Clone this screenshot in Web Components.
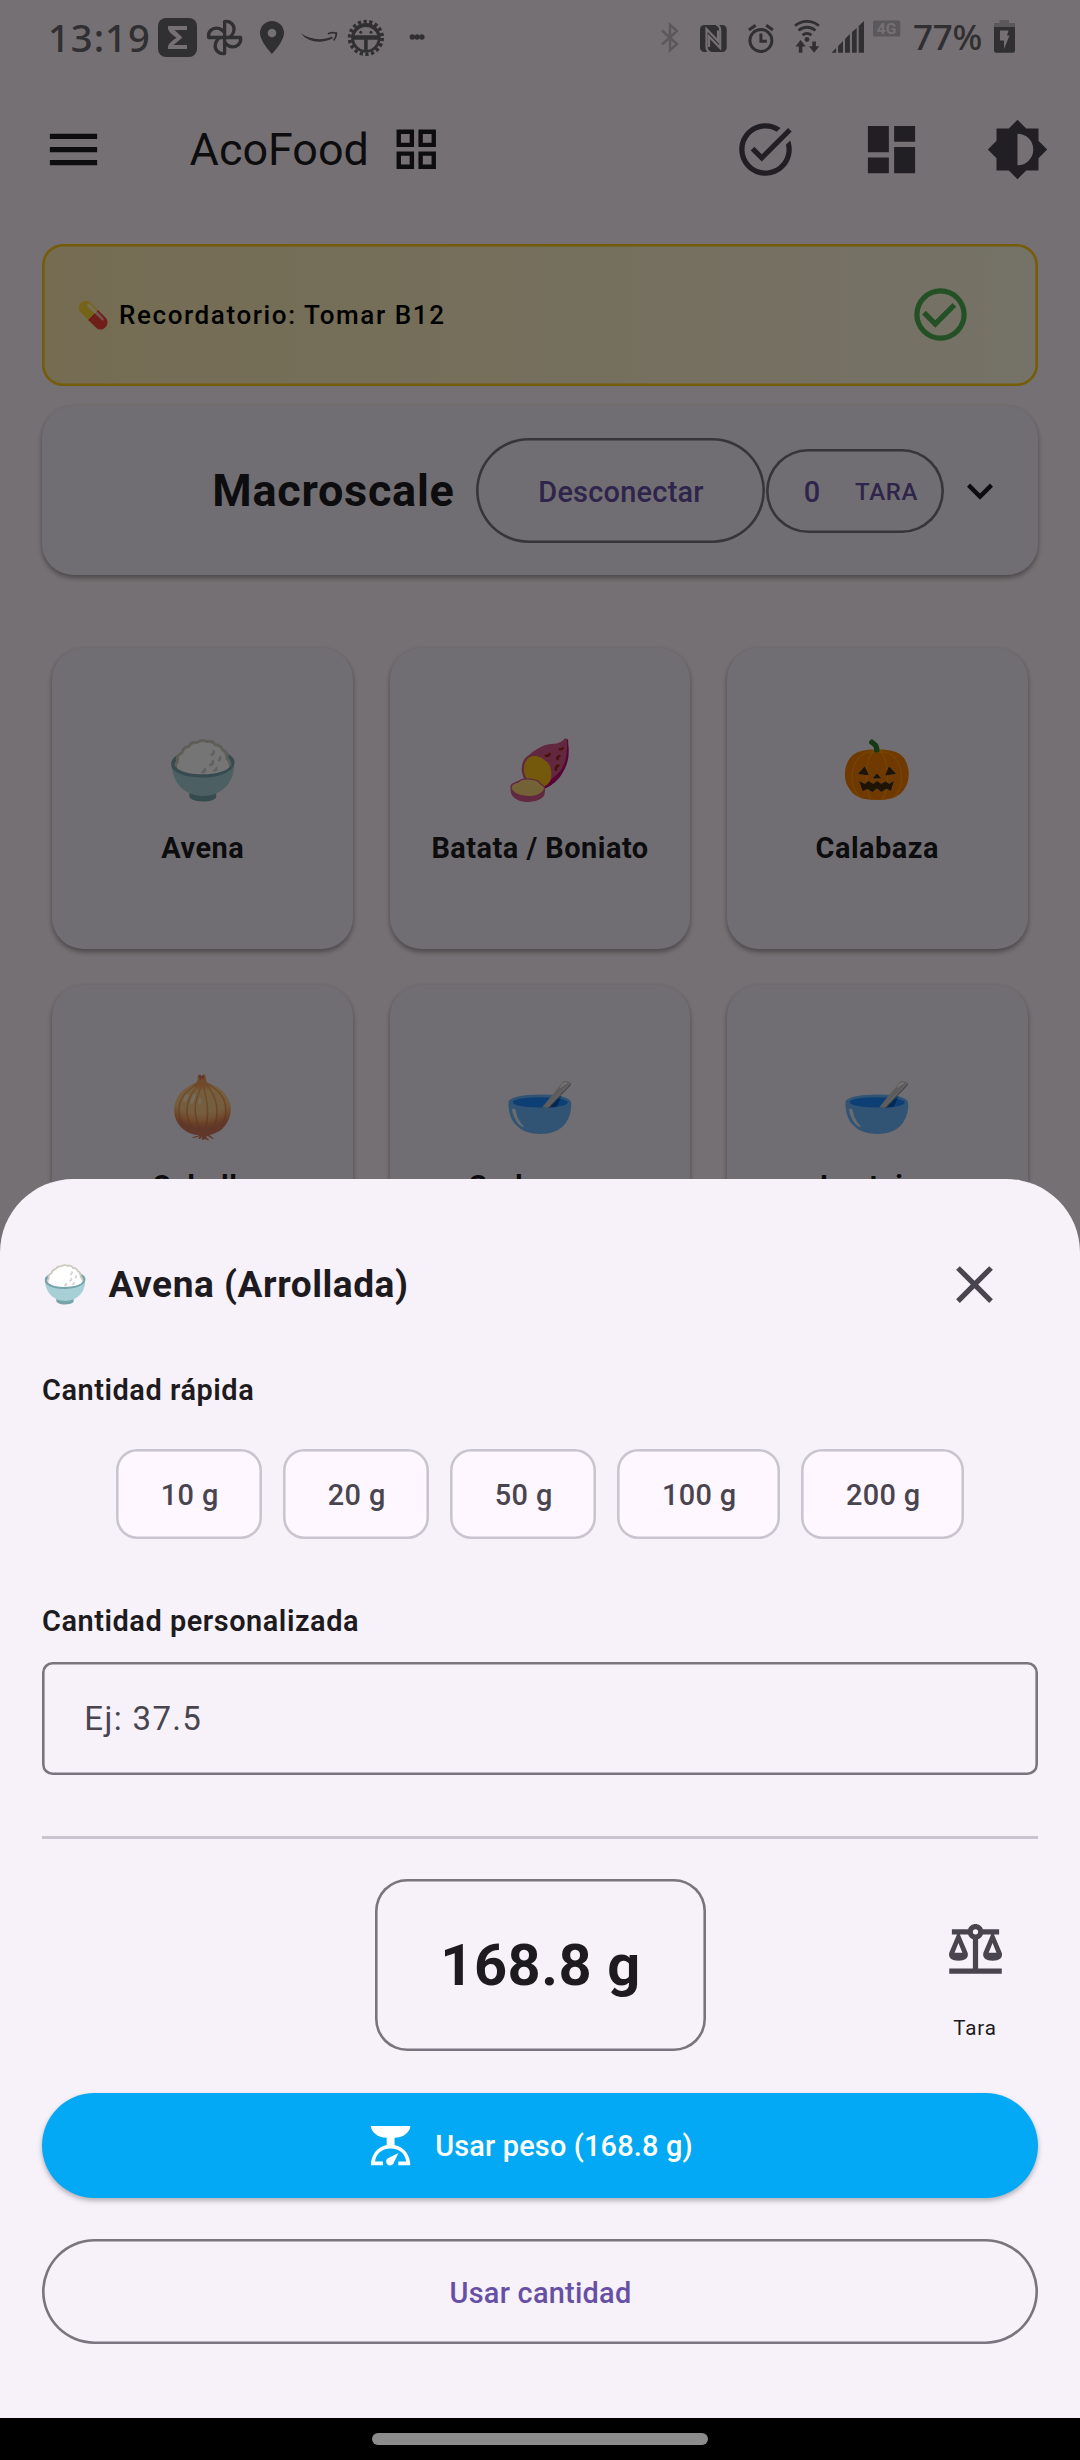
<!DOCTYPE html>
<html lang="es">
<head>
<meta charset="utf-8">
<title>AcoFood</title>
<style>
  html, body { margin: 0; padding: 0; }
  body { width: 1080px; height: 2460px; overflow: hidden; font-family: Roboto, "Noto Color Emoji", sans-serif; background: #fff5fb; }
</style>
</head>
<body>
<aco-app></aco-app>

<script>
const define = (name, html, setup) => {
  const tpl = document.createElement('template');
  tpl.innerHTML = html;
  customElements.define(name, class extends HTMLElement {
    constructor() {
      super();
      this.attachShadow({ mode: 'open' }).append(tpl.content.cloneNode(true));
    }
    connectedCallback() { if (setup) setup(this, this.shadowRoot); }
  });
};

/* 24-unit icon set */
const ICONS = {
  menu: 'M3 6h18v2H3V6m0 5h18v2H3v-2m0 5h18v2H3v-2Z',
  grid: 'M3 11H11V3H3M5 5H9V9H5M13 21H21V13H13M15 15H19V19H15M3 21H11V13H3M5 15H9V19H5M13 3V11H21V3M19 9H15V5H19Z',
  task: 'M22 5.18L10.59 16.6l-4.24-4.24 1.41-1.41 2.83 2.83 10-10L22 5.18zm-2.21 5.04c.13.57.21 1.17.21 1.78 0 4.42-3.58 8-8 8s-8-3.58-8-8 3.58-8 8-8c1.58 0 3.04.46 4.28 1.25l1.44-1.44C16.1 2.67 14.13 2 12 2 6.48 2 2 6.48 2 12s4.48 10 10 10 10-4.48 10-10c0-1.19-.22-2.33-.6-3.39l-1.61 1.61z',
  dashboard: 'M13 3V9H21V3M13 21H21V11H13M3 21H11V15H3M3 13H11V3H3V13Z',
  brightness: 'M12 18V6A6 6 0 0 1 18 12A6 6 0 0 1 12 18M20 15.31L23.31 12L20 8.69V4H15.31L12 .69L8.69 4H4V8.69L.69 12L4 15.31V20H8.69L12 23.31L15.31 20H20V15.31Z',
  done: 'M12 2A10 10 0 0 0 12 22A10 10 0 0 0 12 2M12 20A8 8 0 0 1 12 4A8 8 0 0 1 12 20M5 12L10 17L18 9L16.59 7.58L10 14.17L6.41 10.59Z',
  chevron: 'M7.41 8.58L12 13.17L16.59 8.58L18 10L12 16L6 10L7.41 8.58Z',
  close: 'M19 6.41L17.59 5L12 10.59L6.41 5L5 6.41L10.59 12L5 17.59L6.41 19L12 13.41L17.59 19L19 17.59L13.41 12L19 6.41Z',
  balance: 'M12 3C10.73 3 9.6 3.8 9.18 5H3V7H4.95L2 14C1.53 16 3 17 5.5 17C8 17 9.56 16 9 14L6.05 7H9.17C9.5 7.85 10.15 8.5 11 8.83V20H2V22H22V20H13V8.82C13.85 8.5 14.5 7.85 14.82 7H17.95L15 14C14.53 16 16 17 18.5 17C21 17 22.56 16 22 14L19.05 7H21V5H14.83C14.4 3.8 13.27 3 12 3M12 5A1 1 0 0 1 13 6A1 1 0 0 1 12 7A1 1 0 0 1 11 6A1 1 0 0 1 12 5M5.5 10.25L7 14H4L5.5 10.25M18.5 10.25L20 14H17L18.5 10.25Z',
  scale: 'M2 2H22C22 5 18.5 8 14 8V11.7C18.7 12.6 22 16.6 22 22H15.9V20.1H19.9C19.6 16.2 16.6 13.4 12 13.4C7.4 13.4 4.4 16.2 4.1 20.1H8.1V22H2C2 16.6 5.3 12.6 10 11.7V8C5.5 8 2 5 2 2ZM16 15.7L13.7 20.4A2 2 0 1 1 10.4 18.6Z'
};

define('aco-icon', `
  <style>
    :host { display: block; flex: none; width: var(--size, 63px); height: var(--size, 63px); color: #49454f; }
    svg { display: block; width: 100%; height: 100%; }
  </style>
  <svg viewBox="0 0 24 24" fill="currentColor" fill-rule="evenodd"><path/></svg>`,
  (el, r) => r.querySelector('path').setAttribute('d', ICONS[el.getAttribute('name')]));

define('status-bar', `
  <style>
    :host { display: flex; height: 74px; box-sizing: border-box; padding-left: 48px; align-items: flex-start;
            color: #6a666c; --hole: #fff5fb; --soft: #c4bfc7; }
    svg { display: block; flex: none; fill: currentColor; overflow: visible; }
    span { font-family: "Noto Sans", sans-serif; font-weight: 500; white-space: nowrap; }
    .time { font-size: 38.2px; letter-spacing: 1px; line-height: 44px; margin-top: 15px; width: 110px; }
    .pct { font-size: 35px; letter-spacing: -.3px; line-height: 44px; margin: 15px 0 0 12.5px; width: 80.5px; }
  </style>
  <span class="time">13:19</span>
  <svg style="margin-top:18px" width="39" height="39" viewBox="158 18 39 39">
    <rect x="158" y="18" width="39" height="39" rx="8"/>
    <path style="fill:var(--hole)" d="M168 26H187V30H174.5L182.5 37.5L173.5 45H187V49H168V47C168 44 172 41 176.500 37.800C172 34.500 168 31.500 168 28Z"/>
  </svg>
  <svg style="margin:19px 0 0 9px" width="37" height="37" viewBox="206 19 37 37">
    <g fill="none" stroke="currentColor" stroke-width="3.300" stroke-linejoin="round">
      <path d="M224.600 37.500V21.600C230.500 20.500 234.300 25 234 29.500C233.800 32.700 232 35.500 229.500 37.500"/>
      <path d="M224.600 37.500H240.600C241.500 43.500 237 47 232.600 46.900C229 46.700 226.200 44.500 224.600 42"/>
      <path d="M224.600 37.500V53.500C218.500 54.400 215 50 215.200 45.500C215.400 42.200 217.300 39.500 219.700 37.500"/>
      <path d="M224.600 37.500H208.600C207.700 31.500 212 28 216.600 28.100C220 28.300 223 30.300 224.600 33"/>
    </g>
  </svg>
  <svg style="margin:21px 0 0 16.700px" width="24" height="33" viewBox="259.700 21 24 33">
    <path fill-rule="evenodd" d="M271.700 21A12 12 0 0 0 259.700 33C259.700 41.500 271.700 54 271.700 54S283.700 41.500 283.700 33A12 12 0 0 0 271.700 21ZM271.700 28.700A4.300 4.300 0 1 1 271.700 37.300A4.300 4.300 0 0 1 271.700 28.700Z"/>
  </svg>
  <svg style="margin:31px 0 0 16.900px" width="36" height="12" viewBox="300.600 31 36 12">
    <path d="M300.800 33.500C311 40.500 323 40.500 331.500 36.500L332.500 38.200C322 43.800 308 43 300.800 33.500Z"/>
    <path d="M327.500 34C331 32.200 334 32.500 336 33.200C336 36 335 38.500 333.300 40.300" fill="none" stroke="currentColor" stroke-width="1.800"/>
  </svg>
  <svg style="margin:18.500px 0 0 10.200px" width="38" height="38" viewBox="346.500 18.500 38 38">
    <circle cx="365.400" cy="37.400" r="14.800"/>
    <circle cx="365.400" cy="37.400" r="16.300" fill="none" stroke="currentColor" stroke-width="3.700" stroke-dasharray="3.200 2.490"/>
    <g style="fill:var(--hole)">
      <path d="M354 34.800A12 12 0 0 1 376.800 34.800Z"/>
      <path d="M353.600 39.300H363.600V49.500A12 12 0 0 1 353.600 39.300ZM367.200 39.300H377.200A12 12 0 0 1 367.200 49.500Z"/>
    </g>
    <circle cx="360.300" cy="31.800" r="1.500"/><circle cx="370.500" cy="31.800" r="1.500"/>
  </svg>
  <svg style="margin:34px 0 0 24.500px" width="16" height="6" viewBox="409 34 16 6">
    <circle cx="412.300" cy="37" r="2.700"/><circle cx="417.100" cy="37" r="2.700"/><circle cx="421.900" cy="37" r="2.700"/>
  </svg>

  <svg style="margin:23px 0 0 auto;color:var(--soft)" width="18" height="29" viewBox="661 23 18 29">
    <path d="M662 30.500L677 44L670 50.300V24.700L677 31L662 44.500" fill="none" stroke="currentColor" stroke-width="2.500"/>
  </svg>
  <svg style="margin:24.500px 0 0 21px" width="27" height="27" viewBox="700 24.500 27 27">
    <rect x="700" y="24.500" width="26.700" height="27" rx="4.500"/>
    <path style="stroke:var(--hole)" d="M710.500 52C707 51 706.500 49 706.500 46V28.500L718 40.500V30" fill="none" stroke-width="2.200"/>
    <path style="stroke:var(--hole)" d="M716.200 24C719.700 25 720.200 27 720.200 30V47.500L709 36V46.500" fill="none" stroke-width="2.200"/>
  </svg>
  <svg style="margin:23.500px 0 0 20.700px" width="26" height="29" viewBox="747.700 23.500 26 29">
    <g fill="none" stroke="currentColor" stroke-width="3"><circle cx="760.600" cy="40" r="11"/>
    <path d="M748.600 29.500L755.300 24.800M772.600 29.500L765.900 24.800M760.600 33V40.800H766.500"/></g>
  </svg>
  <svg style="margin:18.500px 0 0 20.300px" width="26" height="34" viewBox="794 18.500 26 34">
    <g fill="none" stroke="currentColor" stroke-width="2.800"><path d="M795 25.300A18.500 18.500 0 0 1 819 25.300"/>
    <path d="M798.600 30A12.500 12.500 0 0 1 815.400 30"/><path d="M802.600 34.700A6.500 6.500 0 0 1 811.400 34.700"/></g>
    <circle cx="807" cy="39" r="2.400"/>
    <path d="M800.600 39.500L805.800 46H802.400V52.200H798.800V46H795.400ZM814.100 52.200L808.900 45.700H812.300V41H815.900V45.700H819.300Z"/>
  </svg>
  <svg style="margin:21px 0 0 11px" width="33" height="32" viewBox="831 21 33 32">
    <path d="M831.500 52.700L836.100 48V52.700ZM838.100 46V52.700H843V41ZM845 39V52.700H849.900V34ZM852 32V52.700H856.700V28ZM858.700 26V52.700H864V21Z"/>
  </svg>
  <svg style="margin:20px 0 0 8.700px;color:var(--soft)" width="28" height="17" viewBox="872.700 20 28 17">
    <rect x="872.700" y="20.500" width="27.300" height="16" rx="1.500"/>
    <text x="876.500" y="34" font-family="Roboto" font-weight="700" font-size="15.500" style="fill:var(--hole)">4G</text>
  </svg>
  <span class="pct">77%</span>
  <svg style="margin:20px 65.500px 0 0" width="21" height="33" viewBox="993 20 21 33">
    <path style="fill:var(--soft)" d="M998.500 20H1008V23H1014V28H993V23H998.500Z"/>
    <path d="M993 27H1014V50.700A2 2 0 0 1 1012 52.700H995A2 2 0 0 1 993 50.700Z"/>
    <path style="fill:var(--hole)" d="M999 30.500H1007.500L1006 35.500H1008.500L1003 49V40.500H999Z"/>
  </svg>`);

define('top-bar', `
  <style>
    :host { display: flex; align-items: center; height: 151px; padding: 0 31.5px 0 42px; }
    h1 { margin: 0 21px 0 84.6px; font-size: 44.9px; font-weight: 400; line-height: 63px; color: #1d1b20; white-space: nowrap; }
    .dark { color: #1d1b20; }
    .actions { display: flex; gap: 63px; margin-left: auto; }
  </style>
  <aco-icon name="menu" class="dark"></aco-icon>
  <h1><slot></slot></h1>
  <aco-icon name="grid" class="dark" style="--size:52.5px"></aco-icon>
  <div class="actions">
    <aco-icon name="task"></aco-icon><aco-icon name="dashboard"></aco-icon><aco-icon name="brightness"></aco-icon>
  </div>`);

define('reminder-banner', `
  <style>
    :host { display: flex; align-items: center; justify-content: space-between; height: 141.7px; box-sizing: border-box;
            padding: 0 66px 0 35px; border-radius: 21px; background: linear-gradient(90deg, #ffecb3, #fff8e1);
            box-shadow: inset 0 0 0 2.6px #ffc814; }
    span { font-size: 26px; font-weight: 500; letter-spacing: 1.6px; line-height: 40px; color: #000; white-space: nowrap; }
    aco-icon { color: #4caf50; }
  </style>
  <span><slot></slot></span><aco-icon name="done"></aco-icon>`);

define('outline-button', `
  <style>
    :host { display: flex; align-items: center; justify-content: center; box-sizing: border-box; height: 105px; border-radius: 52.5px;
            padding: 2px 0 0 1px; box-shadow: inset 0 0 0 2.6px #79747e; color: #6750a4; font-size: 28.9px; font-weight: 500;
            letter-spacing: .26px; line-height: 40px; white-space: nowrap; }
  </style><slot></slot>`);

define('scale-card', `
  <style>
    :host { display: flex; align-items: center; height: 169.4px; box-sizing: border-box; padding: 1px 0 0 170.3px; border-radius: 31.5px;
            background: #f3eff8; box-shadow: 0 2.6px 4px rgba(0,0,0,.26), 0 3px 7px rgba(0,0,0,.12); }
    h2 { margin: 0 21.1px 0 0; font-size: 45px; font-weight: 700; letter-spacing: .73px; line-height: 60px; color: #1d1b20; }
    .connect { width: 289.8px; }
    .tare { width: 177.5px; height: 84px; margin-left: .8px; justify-content: flex-start; padding: 2px 0 0 37.500px; }
    .tare b { font: 500 24px/40px Roboto, sans-serif; letter-spacing: .6px; margin-left: 34.600px; }
    aco-icon { --size: 52px; color: #1d1b20; margin-left: 10.500px; }
  </style>
  <h2>Macroscale</h2>
  <outline-button class="connect">Desconectar</outline-button>
  <outline-button class="tare"><span>0</span><b>TARA</b></outline-button>
  <aco-icon name="chevron"></aco-icon>`);

define('food-card', `
  <style>
    :host { display: flex; flex-direction: column; align-items: center; box-sizing: border-box; height: 300.8px; padding-top: 83px;
            border-radius: 31.5px; background: #f3eff8; box-shadow: 0 2.6px 4px rgba(0,0,0,.26), 0 3px 7px rgba(0,0,0,.12); }
    .emoji { font: 57.5px/80px "Noto Color Emoji", sans-serif; }
    .name { margin-top: 17.500px; font-size: 28.9px; font-weight: 700; letter-spacing: .5px; line-height: 40px; color: #1d1b20; white-space: nowrap; }
  </style>
  <span class="emoji"><slot name="emoji"></slot></span><span class="name"><slot></slot></span>`);

define('food-grid', `
  <style>:host { display: grid; grid-template-columns: repeat(3, 300.8px); gap: 36.5px; justify-content: center; }</style><slot></slot>`);

define('quick-chip', `
  <style>
    :host { display: flex; align-items: center; justify-content: center; box-sizing: border-box; width: var(--w, 146px); height: 89.4px; padding: 2px 0 0 1px;
            border-radius: 21px; background: #fef7ff; box-shadow: inset 0 0 0 2.6px #cac4d0; color: #49454f;
            font-size: 28.9px; font-weight: 500; letter-spacing: .35px; line-height: 40px; }
  </style><slot></slot>`);

define('field-label', `
  <style>:host { display: block; font-size: 28.9px; font-weight: 600; letter-spacing: .55px; line-height: 40px; color: #1d1b20; }</style><slot></slot>`);

define('amount-field', `
  <style>
    :host { display: flex; align-items: center; box-sizing: border-box; height: 112.7px; padding: 1px 0 0 42.300px; border-radius: 10.5px;
            box-shadow: inset 0 0 0 2.6px #79747e; color: #49454f; font-size: 33px; letter-spacing: 1.35px; line-height: 48px; }
  </style><slot></slot>`);

define('amount-sheet', `
  <style>
    :host { display: flex; flex-direction: column; box-sizing: border-box; height: 1281.3px; border-radius: 73.5px 73.5px 0 0;
            background: #f7f2fa; color: #1d1b20; overflow: hidden; }
    .body { flex: 1; padding: 74.300px 42px 0; }
    header { display: flex; align-items: center; height: 63px; padding-right: 32px; }
    header i { font: 37px/63px "Noto Color Emoji", sans-serif; width: 66.500px; }
    h2 { flex: 1; margin: 0; font-size: 37.1px; font-weight: 700; letter-spacing: .53px; line-height: 63px; }
    .l1 { margin-top: 54.100px; }
    .chips { display: flex; justify-content: center; gap: 21px; margin: 39.200px 0 0 .5px; }
    .wide { --w: 163px; }
    .l2 { margin-top: 62.400px; }
    amount-field { margin-top: 20.900px; }
    hr { border: 0; height: 3px; margin: 61.400px 0 40.400px; background: #cac4d0; }
    .weigh { display: grid; grid-template-columns: 1fr 331px 1fr; height: 171.400px; }
    .weight { display: flex; align-items: center; justify-content: center; border-radius: 32px; box-shadow: inset 0 0 0 2.6px #79747e;
              padding-left: 1px; font-size: 57.75px; font-weight: 700; letter-spacing: .55px; }
    .tare { display: flex; flex-direction: column; align-items: center; width: 63px; justify-self: end; margin-right: 31.5px; padding-top: 37px; }
    .tare span { margin-top: 33.700px; font-size: 20.6px; letter-spacing: .8px; line-height: 30px; }
    .use { display: flex; align-items: center; justify-content: center; box-sizing: border-box; height: 105px; margin: 41.800px 0; padding: 1px 19.800px 0 0;
           border-radius: 52.5px; background: #03a9f4; color: #fff; font-size: 28.9px; font-weight: 500; letter-spacing: .18px; line-height: 40px;
           box-shadow: 0 2.6px 4px rgba(0,0,0,.2), 0 3px 7px rgba(0,0,0,.1); }
    .use aco-icon { --size: 47.25px; color: #fff; margin-right: 20.500px; }
    footer { display: flex; justify-content: center; height: 42px; box-sizing: border-box; padding-top: 15px; background: #000; }
    footer div { width: 336px; height: 12px; border-radius: 6px; background: #8c8c8c; }
  </style>
  <div class="body">
    <header><i>🍚</i><h2>Avena (Arrollada)</h2><aco-icon name="close"></aco-icon></header>
    <field-label class="l1">Cantidad rápida</field-label>
    <div class="chips">
      <quick-chip>10 g</quick-chip><quick-chip>20 g</quick-chip><quick-chip>50 g</quick-chip>
      <quick-chip class="wide">100 g</quick-chip><quick-chip class="wide">200 g</quick-chip>
    </div>
    <field-label class="l2">Cantidad personalizada</field-label>
    <amount-field>Ej: 37.5</amount-field>
    <hr>
    <div class="weigh">
      <span></span>
      <div class="weight">168.8 g</div>
      <div class="tare"><aco-icon name="balance"></aco-icon><span>Tara</span></div>
    </div>
    <div class="use"><aco-icon name="scale"></aco-icon><span>Usar peso (168.8 g)</span></div>
    <outline-button>Usar cantidad</outline-button>
  </div>
  <footer><div></div></footer>`);

define('aco-app', `
  <style>
    :host { display: block; position: relative; width: 1080px; height: 2460px; overflow: hidden; }
    main { padding: 0 42px; }
    reminder-banner { margin-top: 19px; }
    scale-card { margin: 19.900px 0 72.800px; }
    .scrim { position: absolute; inset: 0; background: rgba(0,0,0,.54); }
    amount-sheet { position: absolute; left: 0; right: 0; bottom: 0; }
  </style>
  <status-bar></status-bar>
  <top-bar>AcoFood</top-bar>
  <main>
    <reminder-banner>💊 Recordatorio: Tomar B12</reminder-banner>
    <scale-card></scale-card>
    <food-grid>
      <food-card><span slot="emoji">🍚</span>Avena</food-card>
      <food-card><span slot="emoji">🍠</span>Batata / Boniato</food-card>
      <food-card><span slot="emoji">🎃</span>Calabaza</food-card>
      <food-card><span slot="emoji">🧅</span>Cebolla</food-card>
      <food-card><span slot="emoji">🥣</span>Garbanzos</food-card>
      <food-card><span slot="emoji">🥣</span>Lentejas</food-card>
    </food-grid>
  </main>
  <div class="scrim"></div>
  <amount-sheet></amount-sheet>`);
</script>
</body>
</html>
